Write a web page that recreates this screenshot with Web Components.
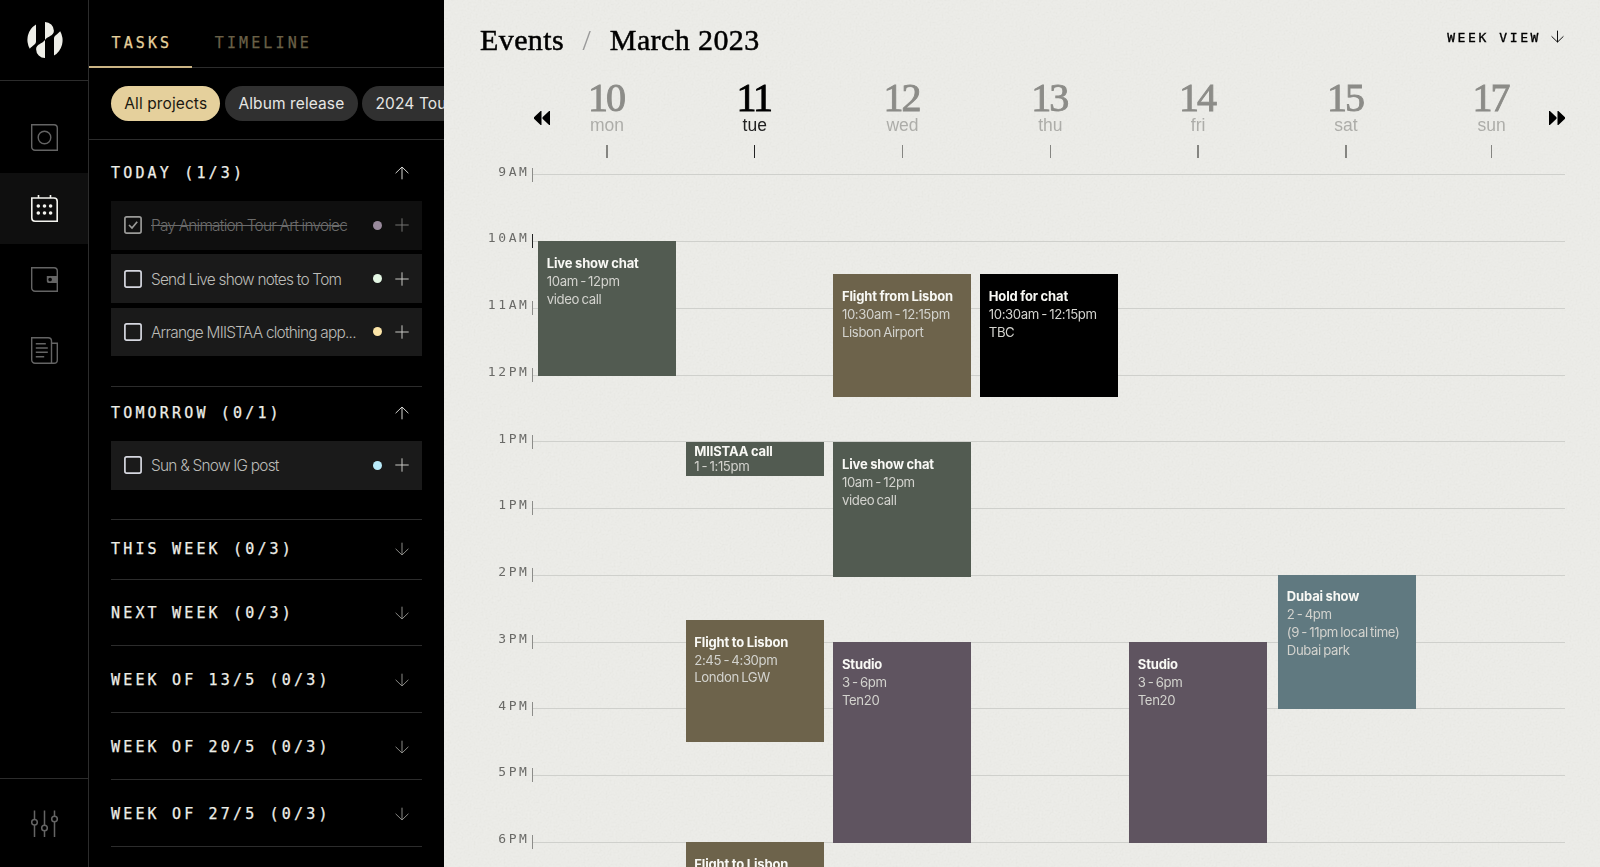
<!DOCTYPE html>
<html lang="en">
<head>
  <meta charset="utf-8">
  <title>Events</title>
  <style>
    html, body {
      margin: 0;
      height: 100%;
      overflow: hidden;
      background: #000;
    }

    body {
      --line: #2c2c2c;
      --ink: #eeeee8;
      --gold: #e5d09c;
      --mono: "DejaVu Sans Mono", monospace;
      --sans: Inter, sans-serif;
      --serif: "Liberation Serif", serif;
      font-family: var(--sans);
      color: var(--ink);
    }
  </style>
</head>
<body>
  <planner-app>
    <nav-rail slot="rail"></nav-rail>
    <task-panel slot="panel">
      <task-section label="TODAY (1/3)" style="--head: 61px; --foot: 29.5px; --drop: 4.4px" open>
        <task-item color="#998a9c" done>Pay Animation Tour Art invoiec</task-item>
        <task-item color="#e4f7e4">Send Live show notes to Tom</task-item>
        <task-item color="#fce5a8">Arrange MIISTAA clothing app...</task-item>
      </task-section>
      <task-section label="TOMORROW (0/1)" style="--head: 54.4px; --foot: 29.1px; --lift: 2px; --drop: 0px" open>
        <task-item color="#b9ebfa">Sun &amp; Snow IG post</task-item>
      </task-section>
      <task-section label="THIS WEEK (0/3)" style="--head: 59px; --drop: 0px"></task-section>
      <task-section label="NEXT WEEK (0/3)"></task-section>
      <task-section label="WEEK OF 13/5 (0/3)"></task-section>
      <task-section label="WEEK OF 20/5 (0/3)"></task-section>
      <task-section label="WEEK OF 27/5 (0/3)"></task-section>
    </task-panel>
    <week-calendar>
      <day-column>
        <calendar-event start="66.8" length="134.4" color="#525b51" heading="Live show chat">10am - 12pm<br>video call</calendar-event>
      </day-column>
      <day-column>
        <calendar-event start="267.8" length="33.5" color="#525b51" heading="MIISTAA call" compact>1 - 1:15pm</calendar-event>
        <calendar-event start="445.5" length="122.4" color="#6d634b" heading="Flight to Lisbon">2:45 - 4:30pm<br>London LGW</calendar-event>
        <calendar-event start="668" length="122.4" color="#6d634b" heading="Flight to Lisbon"></calendar-event>
      </day-column>
      <day-column>
        <calendar-event start="99.8" length="122.4" color="#6d634b" heading="Flight from Lisbon">10:30am - 12:15pm<br>Lisbon Airport</calendar-event>
        <calendar-event start="267.8" length="134.4" color="#525b51" heading="Live show chat">10am - 12pm<br>video call</calendar-event>
        <calendar-event start="468" length="200.2" color="#5f5460" heading="Studio">3 - 6pm<br>Ten20</calendar-event>
      </day-column>
      <day-column>
        <calendar-event start="99.8" length="122.4" color="#000" heading="Hold for chat">10:30am - 12:15pm<br>TBC</calendar-event>
      </day-column>
      <day-column>
        <calendar-event start="468" length="200.2" color="#5f5460" heading="Studio">3 - 6pm<br>Ten20</calendar-event>
      </day-column>
      <day-column>
        <calendar-event start="400.2" length="134.4" color="#607980" heading="Dubai show">2 - 4pm<br>(9 - 11pm local time)<br>Dubai park</calendar-event>
      </day-column>
    </week-calendar>
  </planner-app>

  <script>
    const define = (name, setup) => {
      customElements.define(name, class extends HTMLElement {
        constructor() {
          super();
          this.attachShadow({ mode: 'open' });
        }

        connectedCallback() {
          const template = document.createElement('template');
          template.innerHTML = setup(this);
          this.shadowRoot.replaceChildren(template.content.cloneNode(true));
        }
      });
    };

    const arrow = (direction, size = 14) => `
      <svg width="${size}" height="${size}" viewBox="0 0 14 14" fill="none" stroke="currentColor">
        <path d="${direction === 'up' ? 'M7 13.3V1M.6 7.2 7 1l6.4 6.2' : 'M7 .7V13M.6 6.8 7 13l6.4-6.2'}"/>
      </svg>`;

    define('planner-app', () => `
      <style>
        :host {
          display: grid;
          grid-template-columns: 89px 355px 1fr;
          height: 100vh;
          overflow: hidden;
        }
      </style>
      <slot name="rail"></slot>
      <slot name="panel"></slot>
      <slot></slot>
    `);

    define('nav-rail', () => `
      <style>
        :host {
          display: flex;
          flex-direction: column;
          box-sizing: border-box;
          height: 100vh;
          border-right: 1px solid var(--line);
          color: #646464;
        }
        svg { display: block; }
        .logo, .settings, .item {
          display: flex;
          align-items: center;
          justify-content: center;
          padding-left: 1px;
        }
        .logo {
          height: 80px;
          border-bottom: 1px solid var(--line);
          color: var(--ink);
        }
        nav { flex: 1; padding-top: 21px; }
        .item { height: 71px; }
        .item_active { background: #0f0f0f; color: #f4f4ef; }
        .settings {
          height: 89px;
          padding-top: 1px;
          box-sizing: border-box;
          border-top: 1px solid var(--line);
        }
      </style>
      <div class="logo">
        <svg width="36" height="36" viewBox="0 0 36 36" fill="currentColor">
          <path d="M9 2.4V19.5C9 22.5 5.5 23.5 2.8 26.7A18 18 0 0 1 9 2.4Z"/>
          <path d="M18 0a8.9 8.9 0 0 1 8.9 8.8c0 5.2-6 5.2-8.9 9.2Z"/>
          <path d="M18 36a8.9 8.9 0 0 1-8.9-8.8c0-5.2 6-5.2 8.9-9.2Z"/>
          <path d="M27 33.6V16.5C27 13.5 30.5 12.5 33.2 9.3A18 18 0 0 1 27 33.6Z"/>
        </svg>
      </div>
      <nav>
        <div class="item">
          <svg width="27" height="27" viewBox="0 0 27 27" fill="none" stroke="currentColor" stroke-width="1.4">
            <path d="M.7.7H23a3.3 3.3 0 0 1 3.3 3.3v22.3H4A3.3 3.3 0 0 1 .7 23Z"/>
            <circle cx="13.5" cy="13.5" r="6.3"/>
          </svg>
        </div>
        <div class="item item_active">
          <svg width="27" height="27" viewBox="0 0 27 27" fill="none" stroke="currentColor" stroke-width="1.6">
            <path d="M.8 3H23a3.2 3.2 0 0 1 3.2 3.2v20H4A3.2 3.2 0 0 1 .8 23ZM7.5 0v3M19.5 0v3"/>
            <g fill="currentColor" stroke="none">
              <circle cx="7.3" cy="11" r="1.8"/><circle cx="13.5" cy="11" r="1.8"/><circle cx="19.6" cy="11" r="1.8"/>
              <circle cx="7.3" cy="18" r="1.8"/><circle cx="13.5" cy="18" r="1.8"/><circle cx="19.6" cy="18" r="1.8"/>
            </g>
          </svg>
        </div>
        <div class="item">
          <svg width="27" height="25" viewBox="0 0 27 25" fill="none" stroke="currentColor" stroke-width="1.4">
            <path d="M.7.7H23a3.3 3.3 0 0 1 3.3 3.3v20.3H4A3.3 3.3 0 0 1 .7 21Z"/>
            <path fill="currentColor" stroke="none" fill-rule="evenodd" d="M15.8 9H26v7H17.5a1.7 1.7 0 0 1-1.7-1.7Zm3.3 1.7a1.8 1.8 0 1 0 .01 0Z"/>
          </svg>
        </div>
        <div class="item">
          <svg width="27" height="27" viewBox="0 0 27 27" fill="none" stroke="currentColor" stroke-width="1.4">
            <path d="M20.5 26.3H4A3.3 3.3 0 0 1 .7 23V.7h16.5A3.3 3.3 0 0 1 20.5 4Zm0 0H23a3.3 3.3 0 0 0 3.3-3.3V6.3h-5.8M4.8 6.8h10M4.8 11h12M4.8 15.3h12M4.8 19.8h8.4"/>
          </svg>
        </div>
      </nav>
      <div class="settings">
        <svg width="27" height="27" viewBox="0 0 27 27" fill="none" stroke="currentColor" stroke-width="1.5">
          <path d="M3.5 .5v8.7M3.5 15v12M13.5 .5V15M13.5 21v6M23.5 .5V6M23.5 12v15"/>
          <circle cx="3.5" cy="12.2" r="2.8"/><circle cx="13.5" cy="18" r="2.8"/><circle cx="23.5" cy="9" r="2.8"/>
        </svg>
      </div>
    `);

    define('task-panel', () => `
      <style>
        :host {
          display: block;
          height: 100vh;
          overflow: hidden;
        }
        .tabs {
          display: flex;
          height: 68px;
          box-sizing: border-box;
          border-bottom: 1px solid var(--line);
          font: 15px/18px var(--mono);
          letter-spacing: 3.12px;
          color: #6a6047;
          -webkit-text-stroke: .25px currentColor;
        }
        .tab { box-sizing: border-box; height: 68px; padding: 34px 20px 0 22.5px; }
        .tab_active { color: var(--gold); border-bottom: 2px solid #cbb484; }
        .chips {
          display: flex;
          align-items: center;
          gap: 4.7px;
          height: 71px;
          padding-left: 22px;
          border-bottom: 1px solid var(--line);
        }
        .chip {
          flex: none;
          box-sizing: border-box;
          height: 35.5px;
          padding: 0 13.3px;
          border-radius: 18px;
          background: #303030;
          color: #e6e6e4;
          font-size: 15.5px;
          line-height: 35.5px;
          letter-spacing: .1px;
        }
        .chip_active { background: var(--gold); color: #1b1810; }
        .sections { padding: 0 22px; }
      </style>
      <div class="tabs">
        <div class="tab tab_active">TASKS</div>
        <div class="tab">TIMELINE</div>
      </div>
      <div class="chips">
        <div class="chip chip_active">All projects</div>
        <div class="chip">Album release</div>
        <div class="chip">2024 Tour</div>
      </div>
      <div class="sections"><slot></slot></div>
    `);

    define('task-section', (host) => {
      const open = host.hasAttribute('open');
      return `
        <style>
          :host {
            display: block;
            border-bottom: 1px solid var(--line);
          }
          .head {
            display: flex;
            align-items: center;
            justify-content: space-between;
            box-sizing: border-box;
            height: var(--head, 65.75px);
            padding: var(--drop, 1.4px) 12.6px var(--lift, 0) 0;
            font: 15px/18px var(--mono);
            letter-spacing: 3.17px;
            -webkit-text-stroke: .25px currentColor;
          }
          svg { color: ${open ? '#d6d6d2' : '#8a8a86'}; }
          .items {
            display: flex;
            flex-direction: column;
            gap: 4.7px;
            padding-bottom: var(--foot, 0);
          }
        </style>
        <div class="head"><span>${host.getAttribute('label')}</span>${arrow(open ? 'up' : 'down')}</div>
        <div class="items"><slot></slot></div>
      `;
    });

    define('task-item', (host) => {
      const done = host.hasAttribute('done');
      return `
        <style>
          :host {
            display: flex;
            align-items: center;
            box-sizing: border-box;
            height: 48.6px;
            padding: 0 12.7px 0 13px;
            background: ${done ? '#0f0f0f' : '#1a1a1a'};
            color: ${done ? '#6b6b6b' : '#bcbcb8'};
          }
          .box { flex: none; margin-right: 9px; color: ${done ? '#9a9a98' : '#d6d8e0'}; }
          .text {
            flex: 1;
            padding-top: 1px;
            font-size: 15.4px;
            font-weight: 300;
            letter-spacing: -.76px;
            white-space: nowrap;
            text-decoration: ${done ? 'line-through' : 'none'};
          }
          .dot {
            width: 9px;
            height: 9px;
            margin-right: 13px;
            border-radius: 50%;
            background: ${host.getAttribute('color')};
          }
          .plus { flex: none; color: ${done ? '#757572' : '#c8c8c4'}; }
        </style>
        <svg class="box" width="18" height="18" viewBox="0 0 18 18" fill="none" stroke="currentColor" stroke-width="1.7">
          <rect x=".9" y=".9" width="16.2" height="16.2" rx="1.8"/>
          ${done ? '<path d="m5 9 3 3 5.2-6.2"/>' : ''}
        </svg>
        <span class="text"><slot></slot></span>
        <span class="dot"></span>
        <svg class="plus" width="14" height="14" viewBox="0 0 14 14" fill="none" stroke="currentColor"><path d="M7 .3v13.4M.3 7h13.4"/></svg>
      `;
    });

    const days = [
      ['10', 'mon'], ['11', 'tue'], ['12', 'wed'], ['13', 'thu'], ['14', 'fri'], ['15', 'sat'], ['17', 'sun'],
    ];
    const hours = ['9AM', '10AM', '11AM', '12PM', '1PM', '1PM', '2PM', '3PM', '4PM', '5PM', '6PM'];

    define('week-calendar', () => `
      <style>
        :host {
          position: relative;
          display: flex;
          flex-direction: column;
          box-sizing: border-box;
          height: 100vh;
          padding: 0 35.5px 0 36px;
          overflow: hidden;
          isolation: isolate;
          background: #ebebe7;
          color: #000;
        }
        /* paper grain under the calendar */
        .grain {
          position: absolute;
          inset: 0;
          width: 100%;
          height: 100%;
          mix-blend-mode: soft-light;
          opacity: .5;
        }
        header, .days, .board { position: relative; flex: none; }
        header {
          display: flex;
          justify-content: space-between;
          height: 84px;
        }
        h1 {
          display: flex;
          margin: 22px 0 0;
          font: 30px/35px var(--serif);
          letter-spacing: .4px;
          -webkit-text-stroke: .5px #000;
        }
        .slash { margin: 0 18.5px; color: #999; -webkit-text-stroke: 0; }
        .view {
          display: flex;
          gap: 10px;
          margin-top: 30px;
          font: 13px/16px var(--mono);
          letter-spacing: 2.6px;
          margin-right: .5px;
          -webkit-text-stroke: .35px #000;
        }
        .days {
          display: grid;
          grid-template-columns: 69.5px 114px 1fr 16px;
          height: 74px;
        }
        .skip { margin-top: 25px; }
        .prev { grid-column: 1; grid-row: 1; padding-left: 54px; }
        .next { grid-column: 4; grid-row: 1; }
        .names {
          display: grid;
          grid-column: 1 / -1;
          grid-row: 1;
          grid-template-columns: repeat(6, 147.8px) 143.6px;
          padding-left: 53px;
        }
        .day {
          display: flex;
          flex-direction: column;
          align-items: center;
          color: #adada9;
          font: 17.5px/20px "Liberation Sans", sans-serif;
        }
        .day b {
          height: 35.5px;
          margin: -5px 0 0 -2px;
          color: #8c8c88;
          font: 40px/38px var(--serif);
          letter-spacing: -2px;
          -webkit-text-stroke: .9px currentColor;
        }
        .day::after {
          content: "";
          width: 1.3px;
          height: 13.3px;
          margin-top: 10px;
          background: #858581;
        }
        .day_today { color: #222; }
        .day_today b { color: #000; }
        .day_today::after { background: #222; }
        .board { display: grid; padding-top: 9.7px; }
        .hours, .columns { grid-area: 1 / 1; }
        .hour {
          display: grid;
          grid-template-columns: 53px 1fr;
          height: 66.75px;
        }
        .label {
          height: 14px;
          box-sizing: border-box;
          padding-right: 2.5px;
          border-right: 1.3px solid #8c8c89;
          color: #6a6a67;
          font: 13px/14px var(--mono);
          letter-spacing: 2.6px;
          text-align: right;
        }
        .label span { position: relative; top: -3px; }
        .hour:nth-child(2) .label { border-color: #222; }
        .rule { height: 1px; margin-top: 6.8px; background: #cfd0cc; }
        .columns {
          display: grid;
          grid-template-columns: 147.5px 147.7px 146.8px 149px 149px 1fr;
          margin-left: 58px;
          padding-top: 6.8px;
          height: 700px;
          overflow: hidden;
        }
      </style>
      <svg class="grain">
        <filter id="noise" x="0" y="0" width="100%" height="100%" color-interpolation-filters="sRGB">
          <feTurbulence type="fractalNoise" baseFrequency=".5" numOctaves="2"/>
          <feColorMatrix values=".4 .3 .3 0 0 .4 .3 .3 0 0 .4 .3 .3 0 0 0 0 0 0 1"/>
        </filter>
        <rect width="100%" height="100%" filter="url(#noise)"/>
      </svg>
      <header>
        <h1><span>Events</span><span class="slash">/</span><span>March 2023</span></h1>
        <div class="view"><span>WEEK VIEW</span>${arrow('down', 13)}</div>
      </header>
      <div class="days">
        <div class="skip prev">
          <svg width="16" height="14" viewBox="0 0 16 14"><path d="M7.5 0v14H6.6L0 7.8V6.2L6.6 0ZM16 0v14h-.9L8.5 7.8V6.2L15.1 0Z"/></svg>
        </div>
        <div class="names">
          ${days.map(([number, name]) => `<div class="day ${name === 'tue' ? 'day_today' : ''}"><b>${number}</b>${name}</div>`).join('')}
        </div>
        <div class="skip next">
          <svg width="16" height="14" viewBox="0 0 16 14"><path d="M0 0v14h.9l6.6-6.2V6.2L.9 0ZM8.5 0v14h.9L16 7.8V6.2L9.4 0Z"/></svg>
        </div>
      </div>
      <div class="board">
        <div class="hours">
          ${hours.map((hour) => `<div class="hour"><div class="label"><span>${hour}</span></div><div class="rule"></div></div>`).join('')}
        </div>
        <div class="columns"><slot></slot></div>
      </div>
    `);

    // All events of a day share one grid cell, each pushed down to its start.
    define('day-column', () => `
      <style>
        :host {
          display: grid;
          grid-template: 1fr / 138px;
          align-items: start;
        }
        ::slotted(*) { grid-area: 1 / 1; }
      </style>
      <slot></slot>
    `);

    define('calendar-event', (host) => {
      const compact = host.hasAttribute('compact');
      return `
        <style>
          :host {
            display: block;
            box-sizing: border-box;
            height: ${host.getAttribute('length')}px;
            margin-top: ${host.getAttribute('start')}px;
            padding: ${compact ? '1.4px' : '13.8px'} 0 0 8.8px;
            background: ${host.getAttribute('color')};
            color: #d3d3ce;
            font-size: 13.2px;
            line-height: ${compact ? '15.7px' : '17.8px'};
            letter-spacing: -.4px;
            word-spacing: -1px;
            white-space: nowrap;
          }
          strong {
            display: block;
            color: #f8f8f4;
            font-size: 13px;
            font-weight: 700;
            letter-spacing: -.15px;
            word-spacing: -.3px;
          }
        </style>
        <strong>${host.getAttribute('heading')}</strong>
        <slot></slot>
      `;
    });
  </script>
</body>
</html>
